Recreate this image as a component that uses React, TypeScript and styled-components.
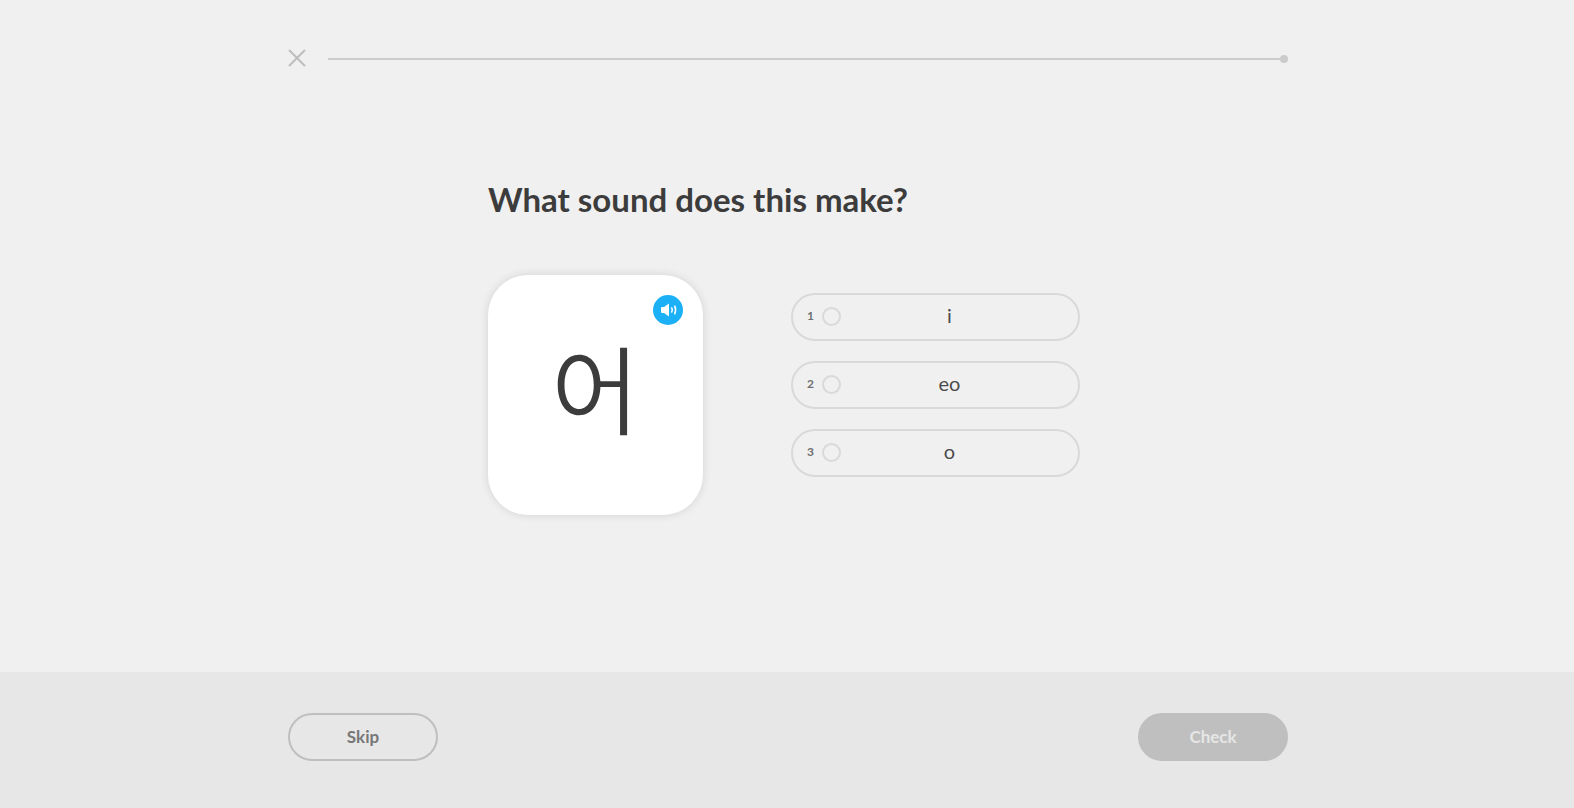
import React, { useState } from "react";
import styled, { createGlobalStyle } from "styled-components";

const GlobalStyle = createGlobalStyle`
  *, *::before, *::after { box-sizing: border-box; }
  body {
    margin: 0;
    background: #f0f0f0;
    color: #3c3c3c;
    font-family: Lato, "Noto Sans CJK KR", sans-serif;
  }
  button { font-family: inherit; cursor: pointer; }
`;

const Page = styled.div`
  min-height: 100vh;
  display: flex;
  flex-direction: column;
`;

const Container = styled.div`
  width: 100%;
  max-width: 1002px;
  margin: 0 auto;
  padding-left: 2px;
`;

const Header = styled.header`
  padding-top: 48px;
`;

const HeaderRow = styled(Container)`
  display: flex;
  align-items: center;
  gap: 22px;
`;

const CloseButton = styled.button`
  display: flex;
  width: 18px;
  height: 20px;
  padding: 0;
  border: 0;
  align-items: flex-start;
  background: none;
  color: #bdbdbd;
`;

const Progress = styled.div`
  flex: 1;
  display: flex;
  align-items: center;
  height: 22px;
`;

const Track = styled.div`
  flex: 1;
  height: 2px;
  background: #cbcbcb;
`;

const TrackEnd = styled.div`
  width: 8px;
  height: 8px;
  border-radius: 50%;
  background: #cbcbcb;
`;

const Main = styled.main`
  flex: 1;
  padding: 109px 0 48px;
`;

const Question = styled.section`
  width: 100%;
  max-width: 600px;
  margin: 0 auto;
  padding-right: 8px;
`;

const Title = styled.h1`
  margin: 0;
  font-size: 33px;
  line-height: 40px;
  font-weight: 700;
  white-space: nowrap;
`;

const Exercise = styled.div`
  display: flex;
  align-items: flex-start;
  justify-content: space-between;
  gap: 24px;
  margin-top: 56px;
`;

const Card = styled.div`
  position: relative;
  flex: none;
  display: flex;
  align-items: flex-start;
  justify-content: center;
  width: 215px;
  height: 240px;
  padding-top: 51px;
  border-radius: 40px;
  background: #fff;
  box-shadow: 0 0 10px rgba(0, 0, 0, 0.12);
`;

const Letter = styled.span`
  font-family: "Noto Sans CJK KR", sans-serif;
  font-size: 96px;
  line-height: 120px;
  font-weight: 350;
`;

const SoundButton = styled.button`
  position: absolute;
  top: 20px;
  right: 20px;
  display: flex;
  width: 30px;
  height: 30px;
  padding: 0;
  border: 0;
  border-radius: 50%;
  background: #1cb0f6;
`;

const Options = styled.fieldset`
  display: flex;
  flex-direction: column;
  gap: 20px;
  width: 289px;
  min-width: 0;
  margin: 18px 0 0;
  padding: 0;
  border: 0;
`;

const Option = styled.label`
  display: flex;
  align-items: center;
  height: 48px;
  padding: 0 14px 2px;
  border: 2px solid #d9d9d9;
  border-radius: 24px;
  cursor: pointer;
`;

const OptionKey = styled.span`
  width: 15px;
  color: #6f6f6f;
  font-size: 12px;
  line-height: 16px;
  font-weight: 700;
`;

const Radio = styled.input`
  appearance: none;
  flex: none;
  width: 19px;
  height: 19px;
  margin: 0;
  border: 2px solid #d9d9d9;
  border-radius: 50%;
  &:checked { background: #1cb0f6; }
`;

const OptionText = styled.span`
  flex: 1;
  padding: 0 6px 2px 0;
  color: #4b4b4b;
  font-size: 20px;
  line-height: 24px;
  text-align: center;
`;

const Footer = styled.footer`
  padding: 41px 0 47px;
  background: #e7e7e7;
`;

const Actions = styled(Container)`
  display: flex;
  justify-content: space-between;
`;

const ActionButton = styled.button<{ $filled?: boolean }>`
  width: 150px;
  height: 48px;
  padding: 0;
  border: 2px solid #bfbfbf;
  border-radius: 24px;
  background: ${(p) => (p.$filled ? "#bfbfbf" : "transparent")};
  color: ${(p) => (p.$filled ? "#e6e6e6" : "#777")};
  font-size: 17px;
  line-height: 24px;
  font-weight: 700;
`;

const answers = ["i", "eo", "o"];

export default function App() {
  const [selected, setSelected] = useState<string | null>(null);
  return (
    <Page>
      <GlobalStyle />
      <Header>
        <HeaderRow>
          <CloseButton aria-label="Close">
            <svg width="18" height="18" viewBox="0 0 18 18" fill="none" stroke="currentColor" strokeWidth="2">
              <path d="M1 1l16 16M17 1L1 17" />
            </svg>
          </CloseButton>
          <Progress role="progressbar" aria-label="Lesson progress" aria-valuenow={0}>
            <Track />
            <TrackEnd />
          </Progress>
        </HeaderRow>
      </Header>
      <Main>
        <Container>
          <Question>
            <Title>What sound does this make?</Title>
            <Exercise>
              <Card>
                <Letter lang="ko">어</Letter>
                <SoundButton aria-label="Play sound">
                  <svg width="30" height="30" viewBox="0 0 30 30" fill="none">
                    <path d="M9 12h2l5-3.500v13L11 18H9q-1 0-1-1v-4q0-1 1-1z" fill="#fff" />
                    <path d="M18.500 12.400q1.600 2.600 0 5.200M21.600 10.600q2 4.400 0 8.800" stroke="#fff" strokeWidth="1.500" />
                  </svg>
                </SoundButton>
              </Card>
              <Options aria-label="Answers">
                {answers.map((answer, i) => (
                  <Option key={answer}>
                    <OptionKey>{i + 1}</OptionKey>
                    <Radio
                      type="radio"
                      name="answer"
                      value={answer}
                      checked={selected === answer}
                      onChange={() => setSelected(answer)}
                    />
                    <OptionText>{answer}</OptionText>
                  </Option>
                ))}
              </Options>
            </Exercise>
          </Question>
        </Container>
      </Main>
      <Footer>
        <Actions>
          <ActionButton>Skip</ActionButton>
          <ActionButton $filled>Check</ActionButton>
        </Actions>
      </Footer>
    </Page>
  );
}
